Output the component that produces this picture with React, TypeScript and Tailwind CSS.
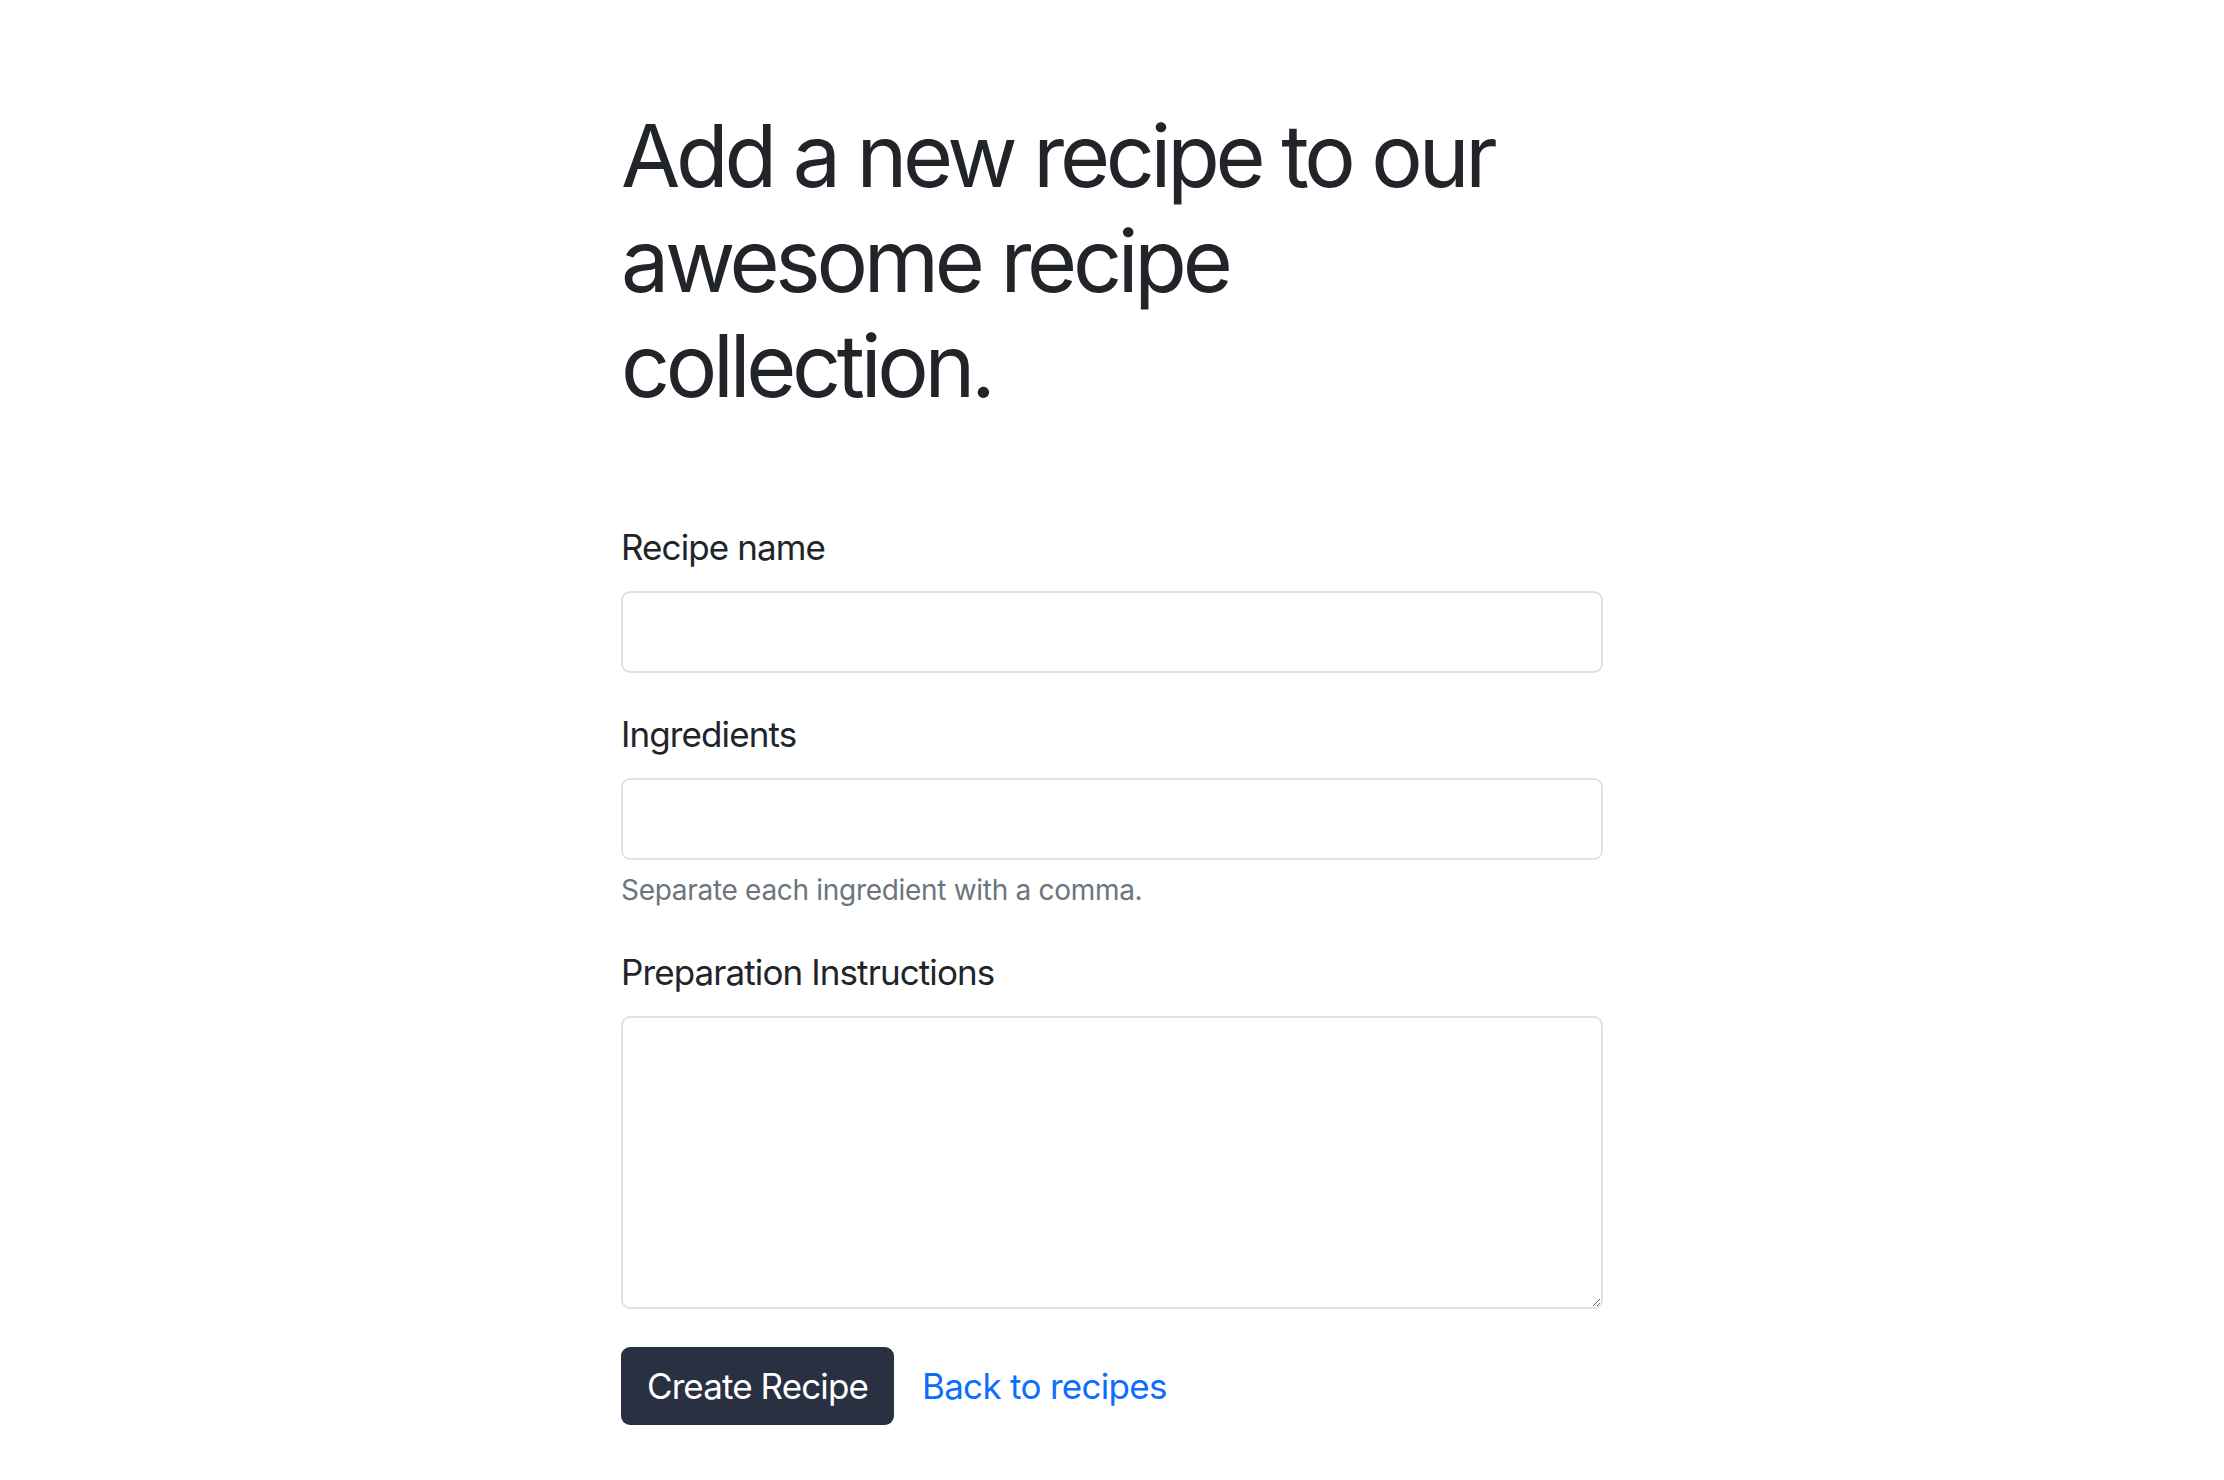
import React from "react";

const FONT = { fontFamily: "Inter, 'Liberation Sans', sans-serif" };

export default function App() {
  return (
    <div className="min-h-screen bg-white text-[#212529]" style={FONT}>
      <div className="mx-auto w-[982px] pt-[104px]">
        <h1 className="text-[86px] leading-[105px] font-normal tracking-[-4.3px]">
          Add a new recipe to our awesome recipe collection.
        </h1>

        <form className="mt-[102px] text-[35px] leading-[52.5px] tracking-[-0.9px]">
          <div className="mb-[35px]">
            <label className="block mb-[17.5px]">Recipe name</label>
            <input
              type="text"
              className="block w-full h-[82px] border-2 border-[#dee2e6] rounded-[9px] px-[26px] outline-none"
            />
          </div>

          <div className="mb-[35px]">
            <label className="block mb-[17.5px]">Ingredients</label>
            <input
              type="text"
              className="block w-full h-[82px] border-2 border-[#dee2e6] rounded-[9px] px-[26px] outline-none"
            />
            <div className="mt-[9px] text-[28px] leading-[42px] tracking-[-0.3px] text-[#6c757d]">
              Separate each ingredient with a comma.
            </div>
          </div>

          <div className="mb-[38px]">
            <label className="block mb-[17.5px]">Preparation Instructions</label>
            <textarea className="block w-full h-[293px] border-2 border-[#dee2e6] rounded-[9px] px-[26px] py-[13px] outline-none" />
          </div>

          <div className="flex items-center gap-[28px]">
            <button
              type="button"
              className="h-[78px] px-[26px] rounded-[9px] bg-[#283041] text-white"
            >
              Create Recipe
            </button>
            <a href="#" className="text-[#0d6efd] tracking-[-0.7px]">
              Back to recipes
            </a>
          </div>
        </form>
      </div>
    </div>
  );
}
